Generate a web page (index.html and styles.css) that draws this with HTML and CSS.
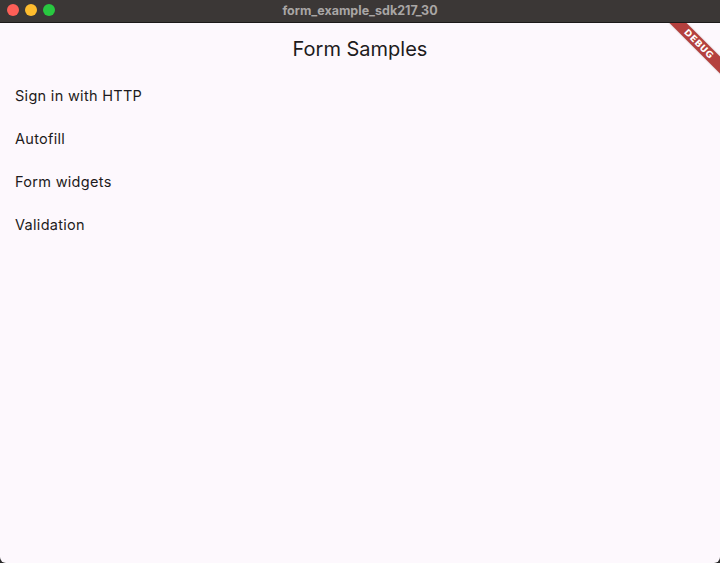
FILE: index.html
```html
<!DOCTYPE html>
<html>
<head>
<meta charset="utf-8">
<link rel="stylesheet" href="styles.css">
</head>
<body>
<div class="window">
  <div class="titlebar">
    <div class="lights">
      <span class="light red"></span>
      <span class="light yellow"></span>
      <span class="light green"></span>
    </div>
    <div class="wintitle">form_example_sdk217_30</div>
  </div>
  <div class="content">
    <header class="appbar">Form Samples</header>
    <ul class="list">
      <li class="tile">Sign in with HTTP</li>
      <li class="tile">Autofill</li>
      <li class="tile">Form widgets</li>
      <li class="tile">Validation</li>
    </ul>
    <div class="banner"><span>DEBUG</span></div>
  </div>
</div>
</body>
</html>
```
FILE: styles.css
```css
html, body {
  margin: 0;
  padding: 0;
  width: 720px;
  height: 563px;
  overflow: hidden;
  background: #2a2a2a;
}
.window {
  width: 720px;
  height: 563px;
  display: flex;
  flex-direction: column;
  border-radius: 0 0 6px 6px;
  overflow: hidden;
  background: #fdf8fd;
}
.titlebar {
  height: 22px;
  flex: 0 0 22px;
  background: #3b3736;
  border-bottom: 1px solid #1c1a1a;
  display: flex;
  align-items: center;
  justify-content: center;
  position: relative;
}
.lights {
  position: absolute;
  left: 7px;
  top: 4px;
  display: flex;
  gap: 6px;
}
.light {
  width: 12px;
  height: 12px;
  border-radius: 50%;
  display: block;
}
.red { background: #fe5f57; }
.yellow { background: #febc2e; }
.green { background: #28c840; }
.wintitle {
  font-family: Inter, "Liberation Sans", sans-serif;
  font-weight: 700;
  font-size: 12.5px;
  color: #a9a6a5;
  letter-spacing: 0;
  margin-top: -2px;
}
.content {
  flex: 1;
  position: relative;
  overflow: hidden;
  font-family: Inter, "Liberation Sans", sans-serif;
  color: #1d1b20;
}
.appbar {
  height: 51px;
  display: flex;
  align-items: center;
  justify-content: center;
  font-size: 20px;
  font-weight: 400;
}
.list {
  list-style: none;
  margin: 0;
  padding: 0;
}
.tile {
  height: 43px;
  display: flex;
  align-items: center;
  padding-left: 15px;
  font-size: 14.5px;
  letter-spacing: 0.3px;
}
.banner {
  position: absolute;
  left: 661px;
  top: 15px;
  width: 76px;
  height: 12px;
  background: #b4403e;
  transform: rotate(45deg);
  display: flex;
  align-items: center;
  justify-content: center;
  box-shadow: 0 0 2px rgba(0,0,0,0.25);
}
.banner span {
  font-family: "DejaVu Sans", "Liberation Sans", sans-serif;
  font-weight: 700;
  font-size: 9px;
  color: #fff;
  letter-spacing: 0.5px;
  line-height: 1;
}
```
